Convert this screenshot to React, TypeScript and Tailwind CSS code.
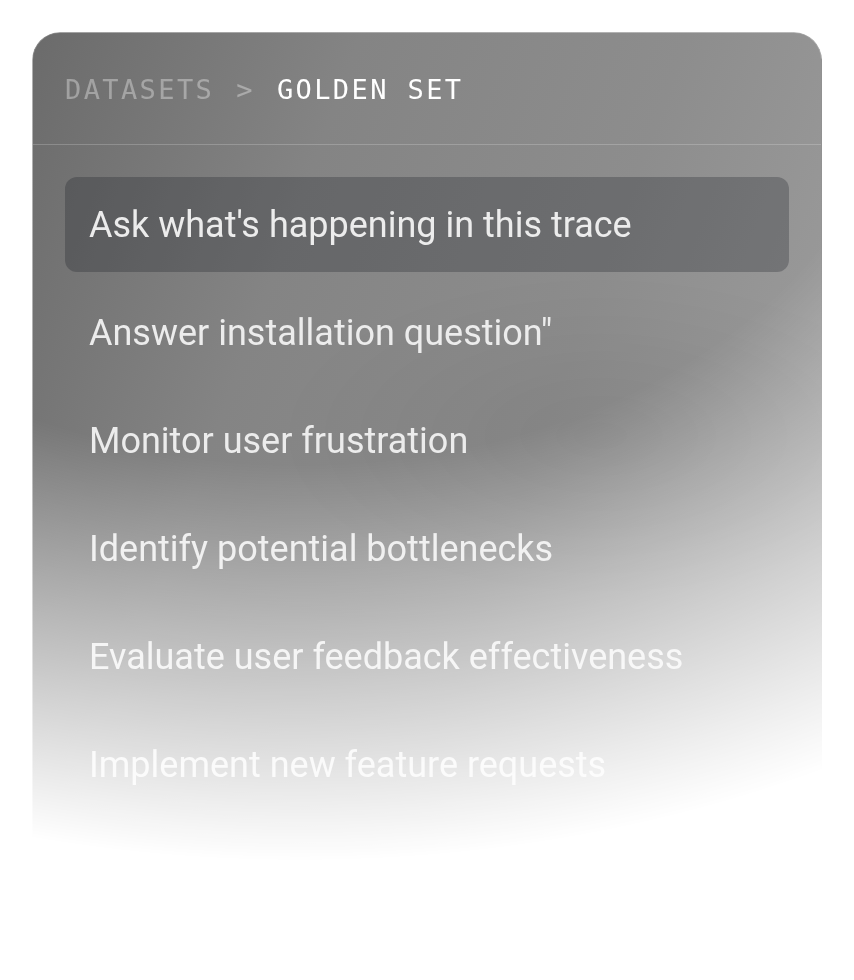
const ITEMS = [
  "Ask what's happening in this trace",
  'Answer installation question"',
  'Monitor user frustration',
  'Identify potential bottlenecks',
  'Evaluate user feedback effectiveness',
  'Implement new feature requests',
]

export default function App() {
  return (
    <div className="min-h-screen bg-white p-8 font-['Roboto','Liberation_Sans',sans-serif]">
      <div className="overflow-hidden rounded-[28px] border border-white/25 bg-[radial-gradient(ellipse_320px_160px_at_72%_48%,rgba(0,0,0,0.07),transparent),linear-gradient(110deg,#6b6b6b_0%,#848484_30%,#8d8d8d_60%,#a3a3a3_100%)] pb-[60px] [mask-image:radial-gradient(ellipse_1150px_830px_at_268px_0px,#000_52%,transparent_100%)] [-webkit-mask-image:radial-gradient(ellipse_1150px_830px_at_268px_0px,#000_52%,transparent_100%)]">
        {/* Breadcrumb */}
        <div className="flex h-[112px] items-center gap-[22px] border-b border-white/20 px-8 pt-1 font-['DejaVu_Sans_Mono','Liberation_Mono',monospace] text-[27px] tracking-[2.4px]">
          <span className="text-white/35">DATASETS</span>
          <span className="text-white/35">&gt;</span>
          <span className="text-white">GOLDEN SET</span>
        </div>

        {/* List */}
        <div className="flex flex-col gap-[13px] px-8 pt-8">
          {ITEMS.map((item, i) => (
            <div
              key={item}
              className={`flex h-[95px] items-center rounded-xl px-6 text-[36px] text-[#ececec] ${
                i === 0 ? 'bg-[rgba(22,26,34,0.27)]' : ''
              }`}
            >
              {item}
            </div>
          ))}
        </div>
      </div>
    </div>
  )
}
